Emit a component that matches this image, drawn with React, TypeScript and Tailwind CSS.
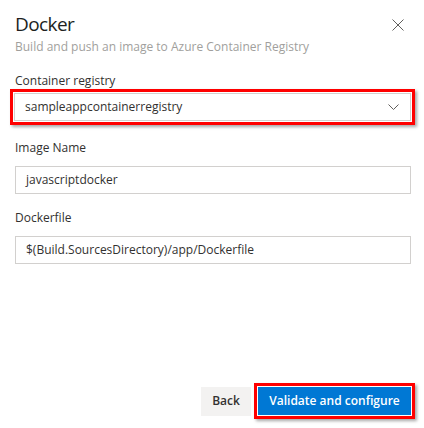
import React from 'react';

function Field({ label, value }: { label: string; value: string }) {
  return (
    <div className="flex flex-col">
      <label className="text-[12px] leading-[16px] text-[#323130]">{label}</label>
      <div className="mt-[10px] h-[28px] w-[396px] border border-[#d2d0ce] flex items-center pl-[10px] text-[12px] text-[#323130]">
        {value}
      </div>
    </div>
  );
}

export default function App() {
  return (
    <div
      className="w-[424px] h-[428px] bg-white flex flex-col overflow-hidden"
      style={{ fontFamily: '"Open Sans", "Noto Sans", sans-serif' }}
    >
      <div className="flex items-start justify-between pl-[15px] pr-[20px] pt-[11px]">
        <h1 className="text-[19px] leading-[26px] tracking-[-0.6px] font-medium text-[#201f1e]">Docker</h1>
        <button className="mt-[8px] text-[#605e5c]" aria-label="Close">
          <svg width="12" height="12" viewBox="0 0 12 12" fill="none" stroke="currentColor" strokeWidth="1">
            <path d="M0.5 0.5 L11.5 11.5 M11.5 0.5 L0.5 11.5" />
          </svg>
        </button>
      </div>
      <p className="pl-[15px] mt-[2px] text-[12px] leading-[16px] text-[#a19f9d]">
        Build and push an image to Azure Container Registry
      </p>

      <label className="pl-[15px] mt-[18px] text-[12px] leading-[16px] text-[#323130]">Container registry</label>
      <div className="ml-[10px] mt-0 w-[405px] border-[3px] border-[#ff0000] p-px shadow-[2px_2px_3px_rgba(0,0,0,0.35)]">
        <div className="h-[28px] border border-[#d2d0ce] flex items-center justify-between pl-[10px] pr-[11px] text-[12px] text-[#323130]">
          <span>sampleappcontainerregistry</span>
          <svg width="11" height="6" viewBox="0 0 11 6" fill="none" stroke="#605e5c" strokeWidth="1">
            <path d="M0.5 0.5 L5.5 5.5 L10.5 0.5" />
          </svg>
        </div>
      </div>

      <div className="pl-[15px] mt-[15px] flex flex-col gap-[16px]">
        <Field label="Image Name" value="javascriptdocker" />
        <Field label="Dockerfile" value="$(Build.SourcesDirectory)/app/Dockerfile" />
      </div>

      <div className="mt-auto mb-[9px] flex justify-end items-center gap-[3px] pr-[9px]">
        <button className="h-[29px] w-[50px] bg-[#f3f2f1] text-[12px] font-semibold text-[#323130]">Back</button>
        <div className="border-[3px] border-[#ff0000] p-px shadow-[2px_2px_3px_rgba(0,0,0,0.35)]">
          <button className="h-[28px] w-[153px] bg-[#0078d4] text-[12px] font-semibold text-white">
            Validate and configure
          </button>
        </div>
      </div>
    </div>
  );
}
